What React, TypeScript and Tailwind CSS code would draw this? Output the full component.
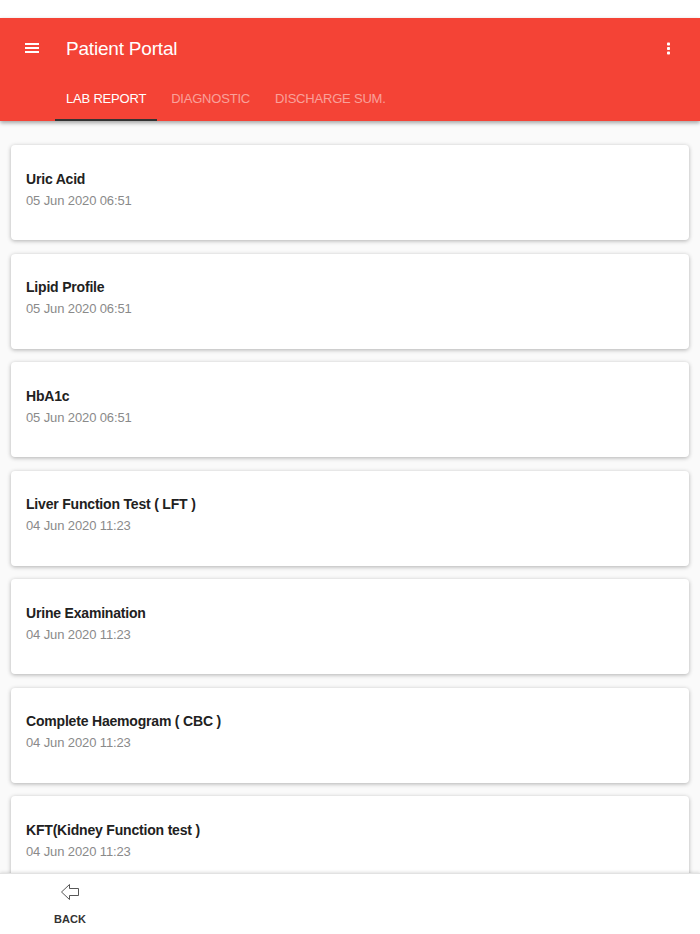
const reports = [
  { name: "Uric Acid", date: "05 Jun 2020 06:51" },
  { name: "Lipid Profile", date: "05 Jun 2020 06:51" },
  { name: "HbA1c", date: "05 Jun 2020 06:51" },
  { name: "Liver Function Test ( LFT )", date: "04 Jun 2020 11:23" },
  { name: "Urine Examination", date: "04 Jun 2020 11:23" },
  { name: "Complete Haemogram ( CBC )", date: "04 Jun 2020 11:23" },
  { name: "KFT(Kidney Function test )", date: "04 Jun 2020 11:23" },
];

const tabs = ["LAB REPORT", "DIAGNOSTIC", "DISCHARGE SUM."];

export default function App() {
  return (
    <div className="h-[934px] w-[700px] flex flex-col overflow-hidden bg-[#fafafa] font-['Liberation_Sans',Arial,sans-serif]">
      {/* Status bar */}
      <div className="h-[18px] shrink-0 bg-white" />

      {/* App bar */}
      <header className="h-[103px] shrink-0 bg-[#f44336] text-white shadow-[0_2px_4px_rgba(0,0,0,0.35)] z-10">
        <div className="h-[60px] flex items-center pl-[24.5px] pr-[30px]">
          <div className="w-[14px] flex flex-col gap-[2.5px]">
            <span className="h-[1.5px] bg-white" />
            <span className="h-[1.5px] bg-white" />
            <span className="h-[1.5px] bg-white" />
          </div>
          <h1 className="ml-[27.5px] text-[19px] tracking-[-0.2px] leading-none font-normal">Patient Portal</h1>
          <svg className="ml-auto" width="3" height="13" viewBox="0 0 3 13" fill="#fff">
            <rect x="0" y="0.5" width="3" height="3" rx="0.8" />
            <rect x="0" y="5" width="3" height="3" rx="0.8" />
            <rect x="0" y="9.5" width="3" height="3" rx="0.8" />
          </svg>
        </div>
        <nav className="h-[43px] flex pl-[55px]">
          {tabs.map((tab, i) => (
            <div
              key={tab}
              className={`px-[11px] mr-[3px] pt-[10px] text-[13px] tracking-[-0.2px] leading-[22px] border-b-2 ${
                i === 0 ? "border-[#333] text-white" : "border-transparent text-white/50"
              }`}
            >
              {tab}
            </div>
          ))}
        </nav>
      </header>

      {/* Report list */}
      <main className="flex-1 min-h-0 overflow-hidden px-[11px] pt-6 flex flex-col gap-[13.5px]">
        {reports.map((r) => (
          <div
            key={r.name}
            className="h-[95px] shrink-0 rounded bg-white px-[15px] pt-[24.5px] shadow-[0_1px_4px_rgba(0,0,0,0.3)]"
          >
            <div className="text-sm tracking-[-0.19px] leading-[18px] font-bold text-[#212121]">{r.name}</div>
            <div className="mt-[4px] text-[13px] tracking-[-0.12px] leading-[18px] text-[#8a8a8a]">{r.date}</div>
          </div>
        ))}
      </main>

      {/* Bottom bar */}
      <footer className="h-[61px] shrink-0 bg-white border-t border-[#e2e2e2] shadow-[0_-1px_3px_rgba(0,0,0,0.12)] z-10">
        <div className="w-[140px] flex flex-col items-center pt-[9px]">
          <svg width="20" height="18" viewBox="0 0 20 18" fill="none" stroke="#444" strokeWidth="0.9">
            <path d="M1.5 9 L9.5 1.5 V5.5 H18.5 V12.5 H9.5 V16.5 Z" strokeLinejoin="miter" />
          </svg>
          <span className="mt-[12px] text-[11px] leading-[13px] font-bold text-[#333]">BACK</span>
        </div>
      </footer>
    </div>
  );
}
